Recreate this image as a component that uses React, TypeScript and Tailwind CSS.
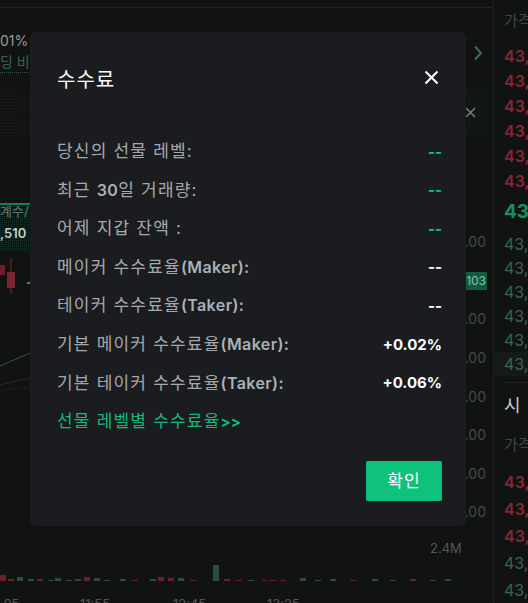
import React from "react";

const font = { fontFamily: "Inter, 'Noto Sans CJK KR', sans-serif" };

function Lat({ children }: { children: React.ReactNode }) {
  return <span className="text-[16px] font-semibold tracking-[0.4px] text-[#a9b2b7]">{children}</span>;
}

const rows: { label: React.ReactNode; value: string; tone: "green" | "white" | "bold" }[] = [
  { label: <>당신의 선물 레벨:</>, value: "--", tone: "green" },
  { label: <>최근 <Lat>30</Lat>일 거래량:</>, value: "--", tone: "green" },
  { label: <>어제 지갑 잔액 :</>, value: "--", tone: "green" },
  { label: <>메이커 수수료율<Lat>(Maker):</Lat></>, value: "--", tone: "white" },
  { label: <>테이커 수수료율<Lat>(Taker):</Lat></>, value: "--", tone: "white" },
  { label: <>기본 메이커 수수료율<Lat>(Maker):</Lat></>, value: "+0.02%", tone: "bold" },
  { label: <>기본 테이커 수수료율<Lat>(Taker):</Lat></>, value: "+0.06%", tone: "bold" },
];

function Chart() {
  const vols = [
    [0, 6, "r"], [8, 2, "r"], [17, 4, "g"], [28, 2, "g"], [37, 2, "r"], [48, 1, "g"], [55, 3, "g"], [66, 1, "g"],
    [75, 2, "g"], [84, 4, "r"], [94, 3, "g"], [104, 1, "g"], [120, 2, "g"], [132, 1, "r"], [150, 2, "g"],
    [158, 4, "r"], [168, 3, "r"], [178, 3, "g"], [190, 1, "r"], [213, 16, "g"], [224, 2, "r"], [236, 1, "r"],
    [248, 1, "g"], [262, 1, "r"], [270, 1, "r"], [280, 1, "r"], [300, 3, "g"], [315, 1, "g"], [330, 2, "g"],
    [350, 1, "r"], [372, 2, "g"], [390, 1, "g"], [410, 2, "r"], [430, 1, "g"], [445, 2, "g"],
  ] as [number, number, string][];
  return (
    <svg className="absolute inset-0" width="467" height="595" viewBox="0 8 467 595">
      <defs>
        <pattern id="dots" width="2" height="2" patternUnits="userSpaceOnUse">
          <rect width="1" height="1" fill="#1c332b" />
        </pattern>
        <pattern id="dots2" width="3" height="3" patternUnits="userSpaceOnUse">
          <rect width="1" height="1" fill="#18211e" />
        </pattern>
      </defs>
      <rect x="0" y="88" width="28" height="48" fill="url(#dots2)" />
      <line x1="0" y1="72.5" x2="30" y2="72.5" stroke="#2f5a4a" strokeDasharray="1 1" />
      <rect x="0" y="203" width="30" height="2" fill="#1a7f5b" />
      <rect x="0" y="205" width="30" height="46" fill="url(#dots)" />
      <line x1="11" y1="258" x2="11" y2="294" stroke="#7a2530" />
      <rect x="7" y="272" width="8" height="16" fill="#7a2530" />
      <rect x="0" y="265" width="5" height="10" fill="#6a2029" />
      <rect x="27" y="282" width="3" height="2" fill="#1c9a6b" />
      <line x1="0" y1="366" x2="30" y2="353" stroke="#2f5a4a" />
      <line x1="0" y1="385" x2="30" y2="378" stroke="#6a2530" strokeDasharray="1 1" />
      <line x1="0" y1="390" x2="30" y2="388" stroke="#2a3533" strokeDasharray="1 2" />
      {vols.map(([x, h, c], i) => (
        <rect key={i} x={x} y={581 - h} width={6} height={h} fill={c === "r" ? "#6a2029" : "#2d4a42"} />
      ))}
    </svg>
  );
}

export default function App() {
  return (
    <div className="relative w-[528px] h-[603px] overflow-hidden bg-[#111313]" style={font}>
      <div className="flex h-full">
        {/* left: chart + price axis */}
        <div className="flex flex-col w-[493px] shrink-0">
          <div className="h-[8px] border-b border-[#202424] bg-[#121414]" />
          <div className="flex flex-1">
            <div className="relative w-[467px] shrink-0">
              <Chart />
              <div className="relative flex flex-col">
                <div className="mt-[24px] text-[14px] leading-[18px] text-[#939b9a]">01%</div>
                <div className="mt-[3px] text-[14px] leading-[18px] text-[#386654]">딩 비</div>
                <div className="mt-[132px] text-[13px] leading-[16px] text-[#6b7473] whitespace-nowrap">계수/</div>
                <div className="mt-[6px] text-[13px] leading-[16px] font-semibold text-[#c8cccc]">,510</div>
              </div>
              <div className="absolute left-[430px] top-[531px] text-[13px] text-[#4f5957]">2.4M</div>
              <div className="absolute bottom-[-9px] left-0 right-0 flex text-[13px] leading-[16px] text-[#4f5957]">
                <span className="w-[80px]">.05</span>
                <span className="w-[93px]">11:55</span>
                <span className="w-[94px]">12:45</span>
                <span>13:25</span>
              </div>
            </div>
            <div className="w-[26px] shrink-0 flex flex-col items-end pr-[7px] text-[14px] leading-[16px] text-[#414b49]">
              <svg width="10" height="16" viewBox="0 0 10 16" className="mt-[37px] mr-[3px] shrink-0">
                <path d="M2 1.5 L8 8 L2 14.5" fill="none" stroke="#3e6a5d" strokeWidth="2" />
              </svg>
              <div className="mt-[29px] h-[44px] w-[21px] -mr-[2px] flex items-center bg-[#121615]">
                <svg width="11" height="11" viewBox="0 0 11 11" className="ml-[-2px]">
                  <path d="M1 1 L10 10 M10 1 L1 10" stroke="#6b857e" strokeWidth="1.5" />
                </svg>
              </div>
              <div className="mt-[89px] flex flex-col items-end">
                <div className="h-[38.6px] flex items-center">.00</div>
                <div className="h-[38.6px] flex items-center -mr-[1px]">
                  <span className="bg-[#0f5c41] text-[#8fbcab] px-[1px] text-[12px] leading-[18px]">103</span>
                </div>
                <div className="h-[38.6px] flex items-center">.00</div>
                <div className="h-[38.6px] flex items-center">.00</div>
                <div className="h-[38.6px] flex items-center">.00</div>
                <div className="h-[38.6px] flex items-center">.00</div>
                <div className="h-[38.6px] flex items-center">.00</div>
                <div className="h-[38.6px] flex items-center">.00</div>
              </div>
            </div>
          </div>
        </div>
        {/* right order book */}
        <div className="flex-1 min-w-0 overflow-hidden border-l border-dotted border-[#242828] pl-[10px] flex flex-col text-[16px] font-semibold whitespace-nowrap">
          <div className="mt-[10px] h-[25px] flex items-center font-normal text-[15px] text-[#3d4846]">가격</div>
          <div className="mt-[10px]">
            {[0, 1, 2, 3, 4, 5].map((i) => (
              <div key={i} className="h-[25px] flex items-center text-[#862632]">43,5</div>
            ))}
          </div>
          <div className="h-[42px] flex items-center text-[19px] font-bold text-[#17905f]">43,5</div>
          {[0, 1, 2, 3, 4].map((i) => (
            <div key={i} className="h-[25px] flex items-center font-normal text-[#3b6256]">43,5</div>
          ))}
          <div className="h-[25px] -ml-[10px] pl-[10px] flex items-center font-normal text-[#3b6256] bg-[#151918]">43,4</div>
          <div className="mt-[6px] border-b border-[#1e2322]" />
          <div className="h-[48px] flex items-center text-[18px] font-normal text-[#c7c9cc]">시</div>
          <div className="h-[38px] flex items-center font-normal text-[15px] text-[#3d4846]">가격</div>
          <div className="mt-[5px]">
            <div className="h-[27px] flex items-center text-[#862632]">43,5</div>
            <div className="h-[27px] flex items-center text-[#862632]">43,5</div>
            <div className="h-[27px] flex items-center text-[#862632]">43,5</div>
            <div className="h-[27px] flex items-center font-normal text-[#3b6256]">43,5</div>
            <div className="h-[27px] flex items-center font-normal text-[#3b6256]">43,5</div>
          </div>
        </div>
      </div>

      {/* modal */}
      <div className="absolute left-[30px] top-[32px] w-[436px] h-[494px] rounded-[6px] bg-[#1b1c1f] pl-[27px] pr-[24px] flex flex-col">
        <div className="mt-[34px] h-[28px] flex items-center justify-between">
          <span className="text-[20px] tracking-[1px] text-white leading-[28px]">수수료</span>
          <svg width="15" height="15" viewBox="0 0 15 15" className="mr-[3px] -mt-[6px]">
            <path d="M1.5 1.5 L13.5 13.5 M13.5 1.5 L1.5 13.5" stroke="#ffffff" strokeWidth="2" />
          </svg>
        </div>
        <div className="mt-[38.5px] flex flex-col">
          {rows.map((r, i) => (
            <div key={i} className="h-[38.6px] flex items-center justify-between">
              <span className="text-[17px] tracking-[1.2px] text-[#a5a9ae] whitespace-nowrap">{r.label}</span>
              <span
                className={
                  r.tone === "green"
                    ? "text-[15px] font-bold text-[#13c07c]"
                    : "text-[15px] font-bold text-white"
                }
              >
                {r.value}
              </span>
            </div>
          ))}
          <div className="h-[38.6px] flex items-center text-[17px] tracking-[1.2px] text-[#13b97a]">
            선물 레벨별 수수료율<span className="font-bold text-[15px] tracking-normal">&gt;&gt;</span>
          </div>
        </div>
        <button className="mt-[20px] self-end w-[76px] h-[40px] rounded-[2px] bg-[#0ec27c] text-white text-[17px] tracking-[1px]">
          확인
        </button>
      </div>
    </div>
  );
}
